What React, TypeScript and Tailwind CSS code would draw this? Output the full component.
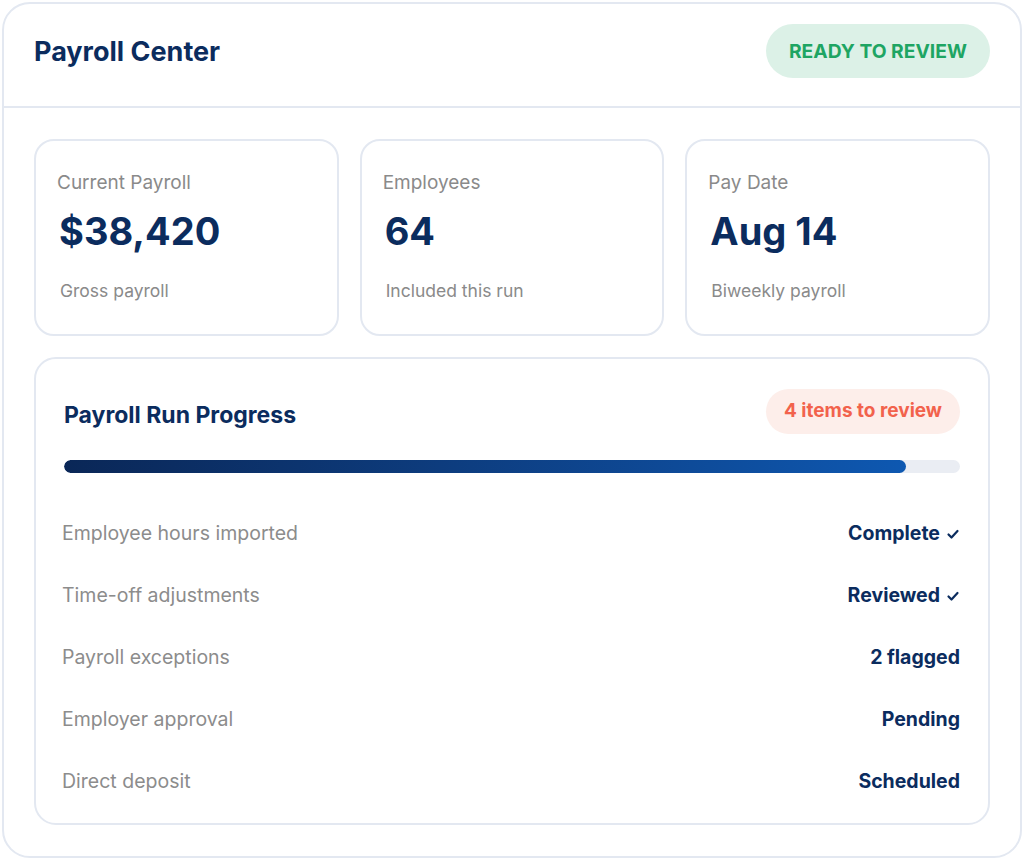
import React from 'react';

interface Stat {
  label: string;
  value: string;
  note: string;
}

interface Step {
  label: string;
  status: string;
  done?: boolean;
}

const stats: Stat[] = [
  { label: 'Current Payroll', value: '$38,420', note: 'Gross payroll' },
  { label: 'Employees', value: '64', note: 'Included this run' },
  { label: 'Pay Date', value: 'Aug 14', note: 'Biweekly payroll' },
];

const steps: Step[] = [
  { label: 'Employee hours imported', status: 'Complete', done: true },
  { label: 'Time-off adjustments', status: 'Reviewed', done: true },
  { label: 'Payroll exceptions', status: '2 flagged' },
  { label: 'Employer approval', status: 'Pending' },
  { label: 'Direct deposit', status: 'Scheduled' },
];

const progress = 94;

const Check: React.FC = () => (
  <svg width="14" height="14" viewBox="0 0 14 14" fill="none" className="ml-[6px]">
    <path d="M2.5 7.5 L5.5 10.5 L11.5 4" stroke="currentColor" strokeWidth="2.2" strokeLinecap="round" strokeLinejoin="round" />
  </svg>
);

const StatCard: React.FC<{ stat: Stat }> = ({ stat }) => (
  <div className="h-[197px] rounded-[20px] border-2 border-[#e3e8f1] px-[21px] pt-[30px]">
    <div className="text-[19px] leading-[24px] text-[#8a8a8a]">{stat.label}</div>
    <div className="mt-[12px] pl-[2px] text-[38px] font-bold leading-[48px] text-[#0b2c5e]">{stat.value}</div>
    <div className="mt-[25px] pl-[3px] text-[17.5px] leading-[22px] text-[#8a8a8a]">{stat.note}</div>
  </div>
);

export default function App() {
  return (
    <div className="bg-white p-[1px] font-['Inter',sans-serif]">
      <div className="m-[1px] h-[856px] w-[1020px] rounded-[28px] border-2 border-[#e3e8f1] bg-white">
        {/* header */}
        <div className="flex h-[104px] items-center justify-between border-b-2 border-[#e3e8f1] px-[30px] pb-[8px]">
          <h1 className="mt-[2px] text-[27px] font-bold text-[#0b2c5e]">Payroll Center</h1>
          <span className="flex h-[54px] items-center rounded-full bg-[#dcf1e7] px-[23px] text-[19.3px] font-bold text-[#1ea563]">
            READY TO REVIEW
          </span>
        </div>

        <div className="flex flex-col gap-[21px] px-[30px] pt-[31px]">
          <div className="grid grid-cols-3 gap-[21px]">
            {stats.map((s) => (
              <StatCard key={s.label} stat={s} />
            ))}
          </div>

          {/* run progress */}
          <div className="h-[468px] rounded-[22px] border-2 border-[#e3e8f1] px-[28px] pt-[30px]">
            <div className="flex items-center justify-between">
              <h2 className="mt-[7px] text-[23px] font-bold text-[#0b2c5e]">Payroll Run Progress</h2>
              <span className="flex h-[45px] items-center rounded-full bg-[#fdeeea] px-[18px] text-[19px] font-bold text-[#f2624c]">
                4 items to review
              </span>
            </div>
            <div className="mt-[26px] h-[13px] w-full overflow-hidden rounded-full bg-[#eaedf3]">
              <div
                className="h-full rounded-full bg-gradient-to-r from-[#0a2757] to-[#0e58b1]"
                style={{ width: `${progress}%` }}
              />
            </div>
            <div className="mt-[49px] flex flex-col gap-[38px]">
              {steps.map((step) => (
                <div key={step.label} className="flex h-[24px] items-center justify-between">
                  <span className="-ml-[2px] text-[19.5px] text-[#8c8c8c]">{step.label}</span>
                  <span className="flex items-center text-[19.5px] font-bold text-[#0b2c5e]">
                    {step.status}
                    {step.done && <Check />}
                  </span>
                </div>
              ))}
            </div>
          </div>
        </div>
      </div>
    </div>
  );
}
